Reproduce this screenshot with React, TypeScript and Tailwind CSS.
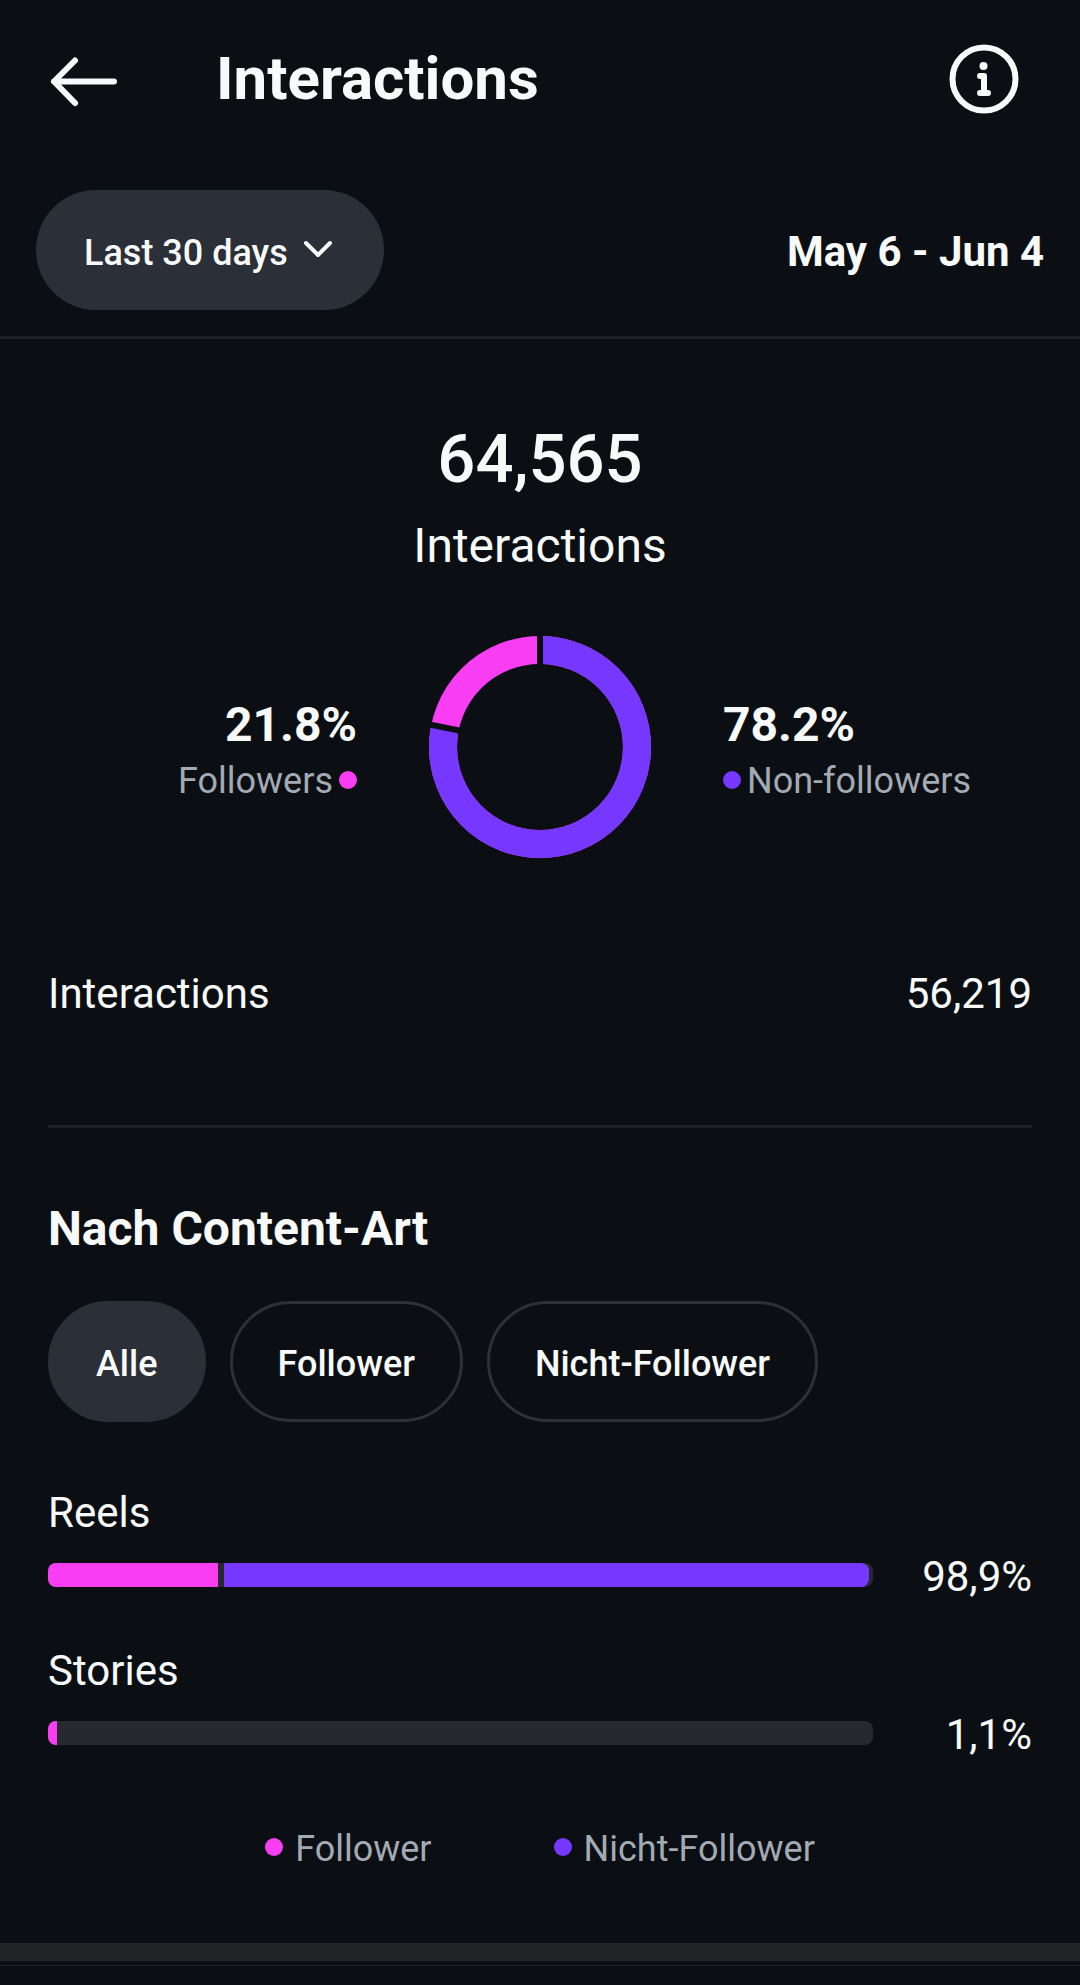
import { useState } from "react";
import clsx from "clsx";

const FILTERS = ["Alle", "Follower", "Nicht-Follower"];

const CONTENT_TYPES = [
  { name: "Reels", total: "98,9%", followers: 20.6, nonFollowers: 78.2 },
  { name: "Stories", total: "1,1%", followers: 1.1, nonFollowers: 0 },
];

const Header = () => (
  <header className="flex h-[158px] items-center pl-12 pr-[60px]">
    <button type="button" aria-label="Back">
      <svg className="h-[72px] w-[72px]" viewBox="0 0 72 72" fill="none" stroke="currentColor" strokeWidth="6" strokeLinecap="round" strokeLinejoin="round">
        <path d="M66 38.5H6M27 17.5L6 38.5l21 21.5" />
      </svg>
    </button>
    <h1 className="ml-24 flex-1 text-[60px] font-bold leading-[72px]">Interactions</h1>
    <button type="button" aria-label="Info">
      <svg className="h-[72px] w-[72px]" viewBox="0 0 72 72" fill="none" stroke="currentColor" strokeWidth="6" strokeLinecap="round" strokeLinejoin="round">
        <circle cx="36" cy="36" r="31.5" />
        <circle cx="35.5" cy="23" r="4" fill="currentColor" stroke="none" />
        <path d="M32 33h4v17M32 50h8" />
      </svg>
    </button>
  </header>
);

const DateFilter = () => (
  <div className="flex items-center justify-between border-b-[3px] border-[#1f2226] px-9 pb-[26px] pt-8">
    <div className="relative">
      <select
        aria-label="Date range"
        className="h-[120px] appearance-none rounded-full bg-[#2b2f37] pl-12 pr-24 pt-1.5 text-[36px] font-medium"
      >
        <option>Last 30 days</option>
      </select>
      <svg
        className="pointer-events-none absolute right-12 top-[46px] h-6 w-9"
        viewBox="0 0 36 24"
        fill="none"
        stroke="currentColor"
        strokeWidth="4"
        strokeLinecap="round"
        strokeLinejoin="round"
      >
        <path d="M6 7l12 12L30 7" />
      </svg>
    </div>
    <p className="pt-1 text-[42px] font-bold leading-14">May 6 - Jun 4</p>
  </div>
);

const Dot = ({ className }: { className: string }) => (
  <span className={clsx("mb-1 h-[18px] w-[18px] shrink-0 rounded-full", className)} />
);

const Donut = ({ followers }: { followers: number }) => {
  const radius = 97;
  const length = 2 * Math.PI * radius;
  const rest = 100 - followers;
  const angle = (rest / 100) * 2 * Math.PI;

  return (
    <svg className="h-[222px] w-[222px]" viewBox="0 0 222 222" fill="none">
      <g strokeWidth="28" transform="rotate(-90 111 111)">
        <circle cx="111" cy="111" r={radius} stroke="#f83df3" />
        <circle cx="111" cy="111" r={radius} stroke="#7638ff" strokeDasharray={`${(rest / 100) * length} ${length}`} />
      </g>
      {/* separators between the two shares */}
      <g stroke="#0b0f14" strokeWidth="6">
        <path d="M111 0v30" />
        <line
          x1={111 + 80 * Math.sin(angle)}
          y1={111 - 80 * Math.cos(angle)}
          x2={111 + 113 * Math.sin(angle)}
          y2={111 - 113 * Math.cos(angle)}
        />
      </g>
    </svg>
  );
};

const Summary = () => (
  <section className="pt-20">
    <p className="text-center text-[67px] font-medium leading-20">64,565</p>
    <p className="mt-[17px] text-center text-[48px] leading-15">Interactions</p>
    <div className="mt-15 grid grid-cols-[1fr_222px_1fr] items-center gap-[72px]">
      <div className="flex flex-col items-end pt-3 leading-[57px]">
        <p className="text-[48px] font-bold">21.8%</p>
        <p className="flex items-center gap-1.5 text-[36px] text-[#a2aab4]">
          Followers
          <Dot className="bg-[#f83df3]" />
        </p>
      </div>
      <Donut followers={21.8} />
      <div className="flex flex-col items-start pt-3 leading-[57px]">
        <p className="text-[48px] font-bold">78.2%</p>
        <p className="flex items-center gap-1.5 text-[36px] text-[#a2aab4]">
          <Dot className="bg-[#7638ff]" />
          Non-followers
        </p>
      </div>
    </div>
  </section>
);

const ContentBar = ({ name, total, followers, nonFollowers }: (typeof CONTENT_TYPES)[number]) => (
  <div className="text-[42px]">
    <p className="leading-14">{name}</p>
    <div className="mt-2 flex items-center">
      <div className="flex h-6 flex-1 gap-1.5 overflow-hidden rounded-lg bg-[#26292e]">
        <div className="bg-[#f83df3]" style={{ width: `${followers}%` }} />
        {nonFollowers > 0 && (
          <div className="rounded-r-lg bg-[#7638ff]" style={{ width: `${nonFollowers}%` }} />
        )}
      </div>
      <p className="w-[159px] pt-1 text-right leading-12">{total}</p>
    </div>
  </div>
);

const ContentTypes = () => {
  const [active, setActive] = useState("Alle");

  return (
    <section className="pt-[73px]">
      <h2 className="text-[48px] font-bold leading-14">Nach Content-Art</h2>
      <div className="mt-11 flex gap-6">
        {FILTERS.map((filter) => (
          <button
            key={filter}
            type="button"
            onClick={() => setActive(filter)}
            className={clsx(
              "h-[121px] rounded-full border-[3px] px-[45px] pt-1 text-[36px] font-medium",
              active === filter ? "border-[#2b2f37] bg-[#2b2f37]" : "border-[#2d3134]",
            )}
          >
            {filter}
          </button>
        ))}
      </div>
      <div className="mt-[63px] flex flex-col gap-[42px]">
        {CONTENT_TYPES.map((type) => (
          <ContentBar key={type.name} {...type} />
        ))}
      </div>
      <div className="mt-[66px] flex justify-center gap-[122px] text-[36px] leading-12 text-[#a2aab4]">
        <p className="flex items-center gap-3">
          <Dot className="bg-[#f83df3]" />
          Follower
        </p>
        <p className="flex items-center gap-3">
          <Dot className="bg-[#7638ff]" />
          Nicht-Follower
        </p>
      </div>
    </section>
  );
};

export default function App() {
  return (
    <div className="min-h-screen bg-[#0b0f14] font-[Roboto,sans-serif] text-[#f8fafa]">
      <Header />
      <DateFilter />
      <main>
        <Summary />
        <div className="px-12">
          <div className="mt-[108px] flex justify-between border-b-[3px] border-[#1f2226] pb-[103px] text-[42px] leading-14">
            <p>Interactions</p>
            <p>56,219</p>
          </div>
          <ContentTypes />
        </div>
      </main>
      <div className="mt-[70px] h-[18px] bg-[#232428]" />
      <div className="mt-1 h-px bg-[#232428]" />
    </div>
  );
}
